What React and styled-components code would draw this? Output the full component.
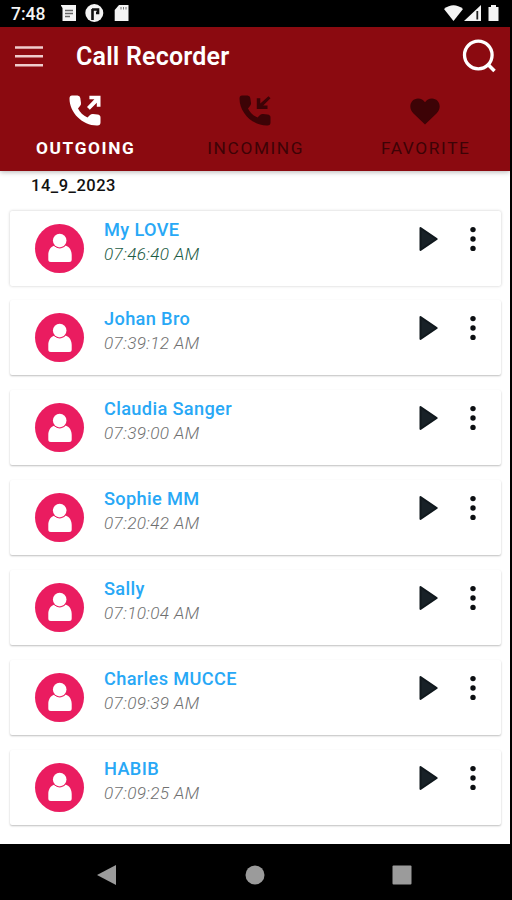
import React from "react";
import styled, { createGlobalStyle, css } from "styled-components";

const COLOR = {
  RED: "#8b0a10",
  DIM: "#3d0306",
  PINK: "#ea1c60",
  BLUE: "#28a8f6",
  GREEN: "#1d5c45",
  GRAY: "#707070",
  DARK: "#182127",
  NAV: "#9b9b9b",
};

const calls = [
  { name: "My LOVE", time: "07:46:40 AM", recent: true },
  { name: "Johan Bro", time: "07:39:12 AM" },
  { name: "Claudia Sanger", time: "07:39:00 AM" },
  { name: "Sophie MM", time: "07:20:42 AM" },
  { name: "Sally", time: "07:10:04 AM" },
  { name: "Charles MUCCE", time: "07:09:39 AM" },
  { name: "HABIB", time: "07:09:25 AM" },
];

const PhoneIcon = ({ incoming }) => (
  <svg width="32" height="32" viewBox="0 0 32 32" fill="currentColor">
    <path d="M3 .5h5.500q2.500 0 2.800 2.500l.7 5q.2 1.800-1 3L9 13.500c2 4 5 7 9.500 9l2.500-2.400q1.200-1.100 3-1l4.500.4q3 .3 3 3v5q0 3-3 3C14 31 .5 18 .5 3.500q0-3 2.500-3z" />
    {incoming ? (
      <path d="M29.500 1.200l2 2-7.300 7.300h4.300V14H17.800V3.300h3.500v5.200z" />
    ) : (
      <path d="M18 12l2.800 2.700 7-7v4H31.500V.7H20.400v3.600h5z" />
    )}
  </svg>
);

const HeartIcon = () => (
  <svg width="30" height="27" viewBox="0 0 30 27" fill="currentColor">
    <path d="M15 26.500 3.500 15.400C-3 8.800 1.500.5 8 .5c3 0 5.500 1.400 7 3.700C16.500 1.900 19 .5 22 .5c6.500 0 11 8.300 4.500 14.900z" />
  </svg>
);

const tabs = [
  { label: "OUTGOING", icon: <PhoneIcon />, active: true },
  { label: "INCOMING", icon: <PhoneIcon incoming /> },
  { label: "FAVORITE", icon: <HeartIcon /> },
];

const StatusBar = () => (
  <StyledStatusBar>
    <Clock>7:48</Clock>
    <svg width="70" height="18" viewBox="0 0 70 18" fill="#f4f4f4">
      <path d="M-.500 1h15.500v16H1.500V4z" />
      <path d="M4 6.500h8M4 9.500h8M4 12.500h5" stroke="#666" strokeWidth="1.300" />
      <circle cx="33.300" cy="9" r="9" />
      <path d="M31.500 16V5M31 5.500h6v3.500h-2" fill="none" stroke="#111" strokeWidth="2.600" />
      <path d="M58 1h9.500v16H53.700V6z" />
      <path d="M60 3v2.500M62.500 3v2.500M65 3v2.500" stroke="#777" />
    </svg>
    <StatusRight width="56" height="18" viewBox="0 0 56 18" fill="#f4f4f4">
      <path d="M0 5Q9.500-2.500 19 5L9.500 17z" />
      <path d="M20 17 37 1v16z" />
      <path d="M33.300 7v8.500" stroke="#222" strokeWidth="1.800" />
      <path d="M44.500 3h2.500V1h5v2h2.500v14h-10z" />
    </StatusRight>
  </StyledStatusBar>
);

const CallCard = ({ name, time, recent }) => (
  <StyledCard $recent={recent}>
    <Avatar>
      <svg width="24" height="30" viewBox="0 0 24 30" fill="#fff">
        <path d="M6.500 12.500C2 14 .3 18 .3 22v4.500q0 2.500 2.500 2.500h18.400q2.500 0 2.500-2.500V22c0-4-1.700-8-6.200-9.500q-5.500 4-11 0z" />
        <circle cx="11.700" cy="7.500" r="6.800" />
        <path d="M6 12.500q5.700 5 11.500 0" fill="none" stroke={COLOR.PINK} strokeWidth="1" />
      </svg>
    </Avatar>
    <CallInfo>
      <CallName>{name}</CallName>
      <CallTime $recent={recent}>{time}</CallTime>
    </CallInfo>
    <PlayButton width="20" height="26" viewBox="0 0 20 26">
      <path d="M1.500 2 17.700 13 1.500 24z" fill={COLOR.DARK} stroke="#10181d" strokeWidth="2" strokeLinejoin="round" />
    </PlayButton>
    <svg width="8" height="26" viewBox="0 0 8 26" fill="#0c0f12">
      <circle cx="4" cy="3.600" r="2.700" />
      <circle cx="4" cy="13" r="2.700" />
      <circle cx="4" cy="22.400" r="2.700" />
    </svg>
  </StyledCard>
);

const App = () => {
  return (
    <Screen>
      <GlobalStyle />
      <StatusBar />
      <Header>
        <Toolbar>
          <svg width="28" height="22" viewBox="0 0 28 22">
            <path d="M0 2.500h28M0 11.300h28M0 20.200h28" stroke="#f0cccc" strokeWidth="2.600" />
          </svg>
          <Title>Call Recorder</Title>
          <svg width="34" height="34" viewBox="0 0 34 34" fill="none" stroke="#fff" strokeWidth="3.300">
            <circle cx="16.300" cy="16" r="13.800" />
            <path d="M25.500 25l7 7" strokeWidth="3.600" />
          </svg>
        </Toolbar>
        <Tabs>
          {tabs.map((tab) => (
            <Tab key={tab.label} $active={tab.active}>
              <TabIcon>{tab.icon}</TabIcon>
              <TabLabel>{tab.label}</TabLabel>
            </Tab>
          ))}
        </Tabs>
      </Header>
      <CallList>
        <DateText>14_9_2023</DateText>
        <Cards>
          {calls.map((call) => (
            <CallCard key={call.time} {...call} />
          ))}
        </Cards>
      </CallList>
      <NavBar>
        <svg width="20" height="22" viewBox="0 0 20 22">
          <path d="M0 11 19 1v20z" />
        </svg>
        <svg width="20" height="20" viewBox="0 0 20 20">
          <circle cx="10" cy="10" r="9.500" />
        </svg>
        <svg width="20" height="20" viewBox="0 0 20 20">
          <rect x="0.500" y="0.500" width="19" height="19" rx="1" />
        </svg>
      </NavBar>
    </Screen>
  );
};
export default App;

const GlobalStyle = createGlobalStyle`
  body {
    margin: 0;
    background: #000;
    font-family: Roboto, "Liberation Sans", sans-serif;
  }
  svg {
    display: block;
    flex: none;
  }
`;

const Screen = styled.div`
  display: flex;
  flex-direction: column;
  box-sizing: border-box;
  width: 512px;
  height: 900px;
  padding-right: 2px;
  background: #000;
  overflow: hidden;
`;

const StyledStatusBar = styled.div`
  display: flex;
  align-items: center;
  box-sizing: border-box;
  height: 27px;
  padding: 0 10px 1px 11px;
`;

const Clock = styled.div`
  width: 50px;
  color: #f4f4f4;
  font-size: 17.5px;
  font-weight: 500;
  line-height: 20px;
  padding-top: 1px;
`;

const StatusRight = styled.svg`
  margin-left: auto;
`;

const Header = styled.div`
  position: relative;
  flex: none;
  height: 144px;
  background: ${COLOR.RED};
  box-shadow: 0 1px 5px rgba(0, 0, 0, 0.3);
`;

const Toolbar = styled.div`
  display: flex;
  align-items: center;
  height: 58px;
  padding: 0 14px 0 15px;
`;

const Title = styled.div`
  flex: 1;
  margin-left: 33px;
  padding-top: 1px;
  color: #fff;
  font-size: 25px;
  font-weight: 600;
  letter-spacing: 0.2px;
`;

const Tabs = styled.div`
  display: grid;
  grid-template-columns: repeat(3, 1fr);
`;

const Tab = styled.div`
  display: flex;
  flex-direction: column;
  align-items: center;
  color: ${COLOR.DIM};
  font-weight: 400;
  ${({ $active }) =>
    $active &&
    css`
      color: #fff;
      font-weight: 700;
    `}
`;

const TabIcon = styled.div`
  display: flex;
  align-items: center;
  height: 52px;
`;

const TabLabel = styled.div`
  padding-left: 1.5px;
  font-size: 17.3px;
  line-height: 23px;
  letter-spacing: 1.6px;
`;

const CallList = styled.div`
  flex: none;
  box-sizing: border-box;
  height: 673px;
  padding: 5px 9.5px 0 10px;
  background: #fff;
`;

const DateText = styled.div`
  height: 34.5px;
  padding-left: 21px;
  color: #111;
  font-size: 16.5px;
  font-weight: 500;
  line-height: 20px;
  letter-spacing: 0.5px;
`;

const Cards = styled.div`
  display: flex;
  flex-direction: column;
  gap: 14.87px;
`;

const StyledCard = styled.div`
  display: flex;
  align-items: flex-start;
  box-sizing: border-box;
  height: 75px;
  padding: 15px 24px 0 25px;
  border-radius: 2px;
  background: #fff;
  box-shadow: ${({ $recent }) =>
    $recent ? "0 0 3px rgba(0, 0, 0, 0.22)" : "0 1px 2px rgba(0, 0, 0, 0.26)"};
`;

const Avatar = styled.div`
  display: flex;
  align-items: center;
  justify-content: center;
  width: 49px;
  height: 49px;
  margin-top: -2px;
  border-radius: 50%;
  background: ${COLOR.PINK};
`;

const CallInfo = styled.div`
  flex: 1;
  margin: -8px 0 0 20px;
`;

const CallName = styled.div`
  color: ${COLOR.BLUE};
  font-size: 18.2px;
  font-weight: 500;
  line-height: 24px;
  letter-spacing: 0.35px;
`;

const CallTime = styled.div`
  color: ${({ $recent }) => ($recent ? COLOR.GREEN : COLOR.GRAY)};
  font-size: 17.2px;
  font-style: italic;
  font-weight: 300;
  line-height: 24px;
  letter-spacing: 0.35px;
`;

const PlayButton = styled.svg`
  margin-right: 30px;
`;

const NavBar = styled.div`
  display: flex;
  align-items: center;
  justify-content: space-between;
  flex: 1;
  padding: 5px 98px 0 97px;
  fill: ${COLOR.NAV};
`;
